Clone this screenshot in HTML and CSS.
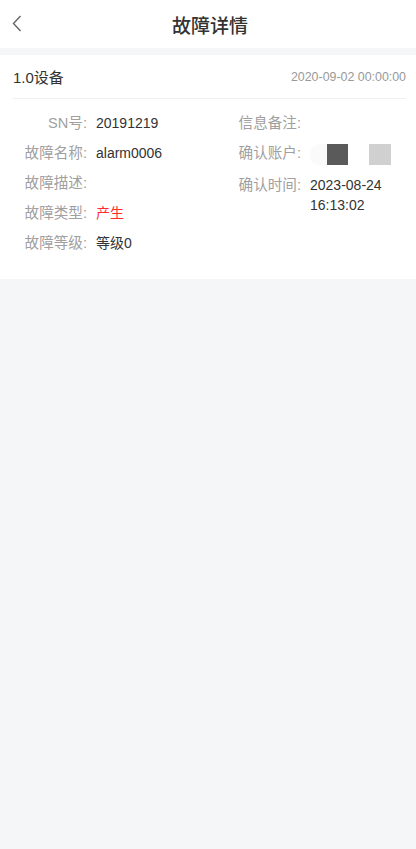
FILE: index.html
```html
<!DOCTYPE html>
<html lang="zh-CN">
<head>
    <meta charset="UTF-8">
    <meta name="viewport" content="width=device-width, initial-scale=1.0">
    <title>故障详情</title>
    <link rel="stylesheet" href="styles.css">
</head>
<body>

<header class="nav-bar">
    <a class="back-btn" href="#">
        <svg width="10" height="17" viewBox="0 0 10 17">
            <path d="M8.5 1 L1.5 8.5 L8.5 16" fill="none" stroke="#666" stroke-width="1.4"/>
        </svg>
    </a>
    <h1>故障详情</h1>
    <span></span>
</header>

<div class="card">
    <div class="card-head">
        <span class="device">1.0设备</span>
        <span class="date">2020-09-02 00:00:00</span>
    </div>

    <div class="details">
        <div class="col">
            <div class="row"><span class="label">SN号:</span><span class="value">20191219</span></div>
            <div class="row"><span class="label">故障名称:</span><span class="value">alarm0006</span></div>
            <div class="row"><span class="label">故障描述:</span><span class="value"></span></div>
            <div class="row"><span class="label">故障类型:</span><span class="value red">产生</span></div>
            <div class="row"><span class="label">故障等级:</span><span class="value">等级0</span></div>
        </div>
        <div class="col">
            <div class="row"><span class="label">信息备注:</span><span class="value"></span></div>
            <div class="row">
                <span class="label">确认账户:</span>
                <span class="value">
                    <span class="masked">
                        <i class="m-pale"></i><i class="m-dark"></i><i class="m-gap"></i><i class="m-light"></i>
                    </span>
                </span>
            </div>
            <div class="row"><span class="label">确认时间:</span><span class="value">2023-08-24 16:13:02</span></div>
        </div>
    </div>
</div>

</body>
</html>
```

FILE: styles.css
```css
body {
    font-family: 'Liberation Sans', 'Noto Sans CJK SC', sans-serif;
    background-color: #f5f6f8;
    color: #333;
    margin: 0;
}

.nav-bar {
    display: grid;
    grid-template-columns: 40px 1fr 40px;
    align-items: center;
    height: 48px;
    background-color: #fff;
}

.back-btn {
    display: flex;
    align-items: center;
    padding-left: 12px;
    height: 48px;
    margin-top: -1px;
}

.nav-bar h1 {
    margin: 0;
    text-align: center;
    font-size: 19px;
    font-weight: 500;
    color: #333;
    transform: translateX(2px);
}

.card {
    background-color: #fff;
    margin-top: 7px;
    padding-bottom: 16px;
}

.card-head {
    display: flex;
    justify-content: space-between;
    align-items: center;
    height: 43px;
    margin: 0 10px 0 13px;
    border-bottom: 1px solid #f0f0f0;
}

.device {
    font-size: 15px;
    color: #333;
}

.date {
    font-size: 12.4px;
    color: #999;
}

.details {
    display: grid;
    grid-template-columns: 214px 1fr;
    padding: 14px 13px 0 13px;
}

.row {
    display: flex;
    font-size: 14px;
    line-height: 20px;
    margin-bottom: 10px;
}

.label {
    flex: 0 0 74px;
    text-align: right;
    font-size: 14.6px;
    color: #a0a0a0;
    margin-right: 9px;
}

.value {
    flex: 1;
    color: #333;
}

.red {
    color: #ff2d2d;
}

/* compte masqué */
.masked {
    display: flex;
    height: 21px;
    margin-top: 1px;
}

.masked i {
    display: block;
    height: 21px;
}

.m-pale {
    width: 17px;
    background-color: #fafafa;
    border-radius: 10px 0 0 10px;
}

.m-dark {
    width: 21px;
    background-color: #5a5a5a;
}

.m-gap {
    width: 21px;
    background-color: #fff;
}

.m-light {
    width: 22px;
    background-color: #d0d0d0;
}
```
